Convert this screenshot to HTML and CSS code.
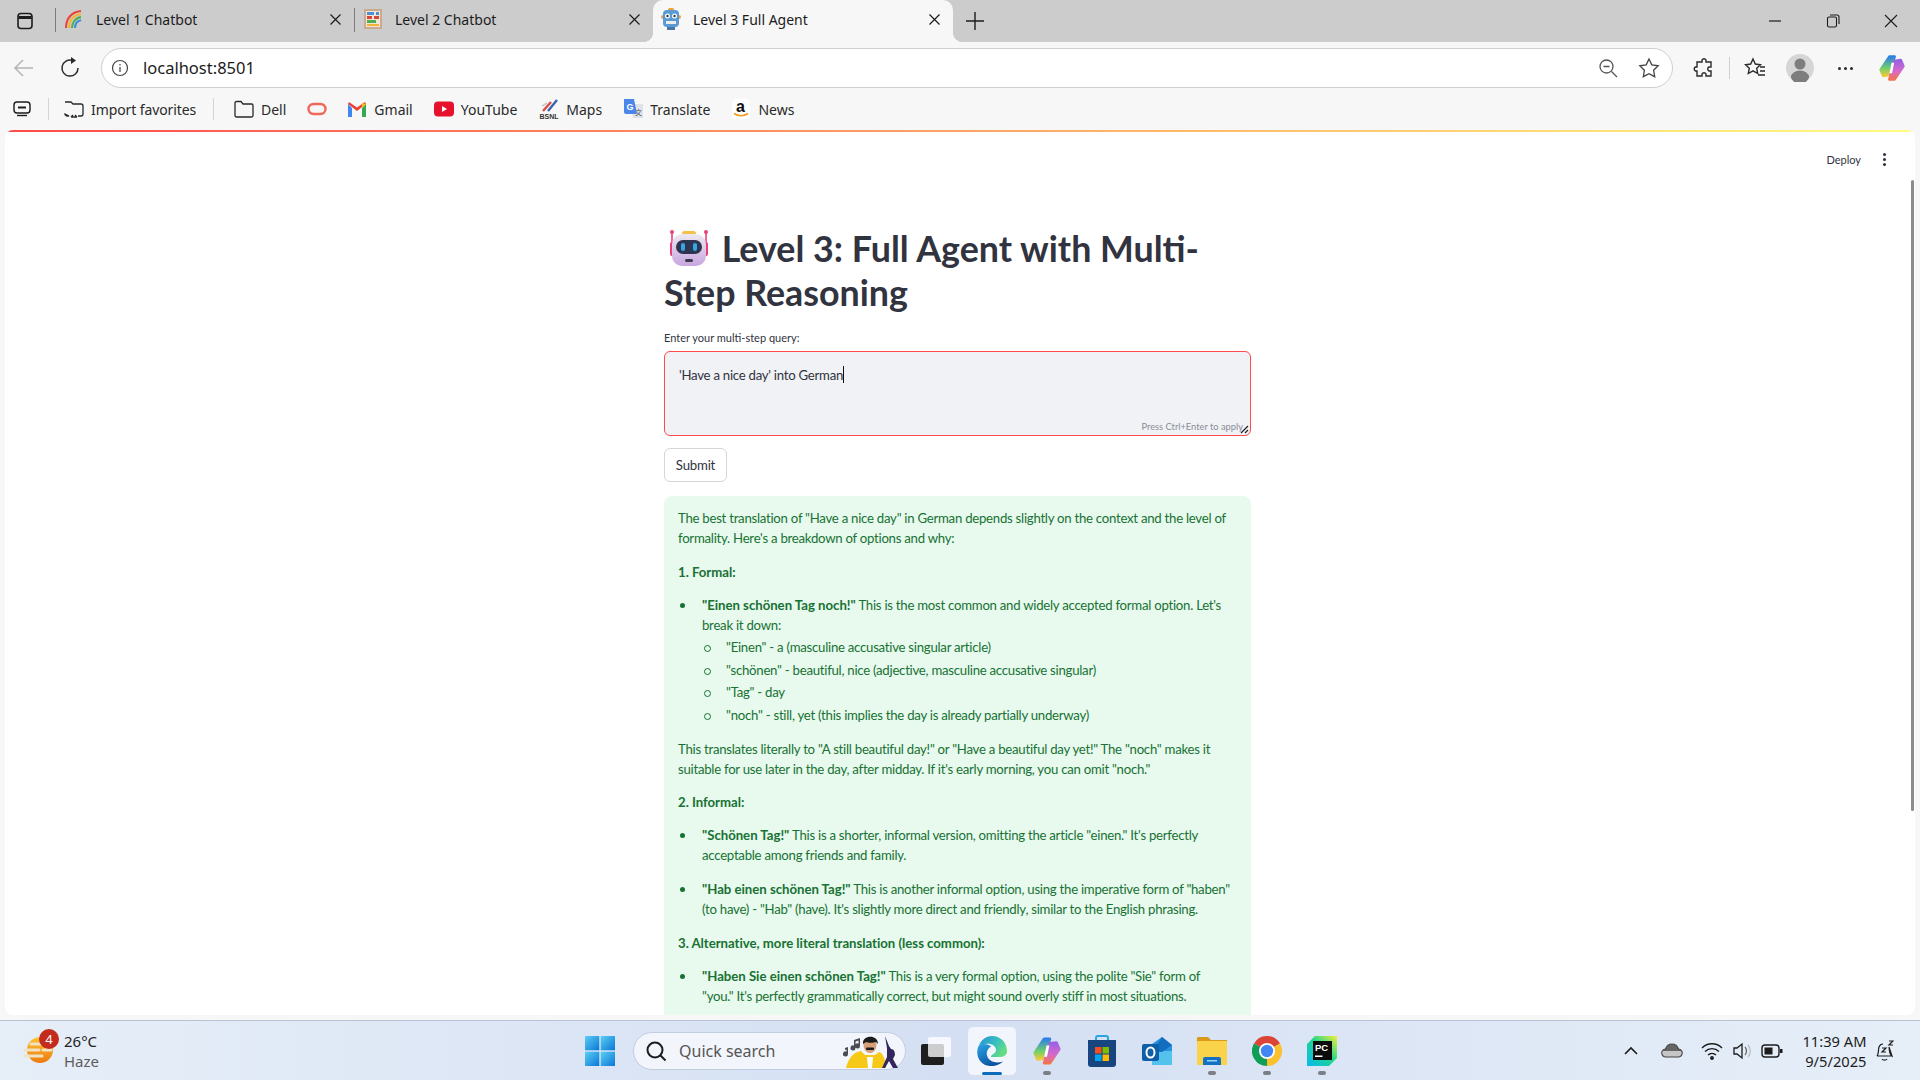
FILE: index.html

```html
<!DOCTYPE html>
<html lang="en">
<head>
    <meta charset="UTF-8">
    <title>Level 3 Full Agent</title>
    <link rel="stylesheet" href="styles.css">
</head>
<body>
    <header class="tabstrip">
        <svg class="tab-panel" width="20" height="20" viewBox="0 0 20 20" fill="none" stroke="#1c1c1c" stroke-width="1.6"><rect x="3" y="2.500" width="14" height="15" rx="3"/><path d="M3.500 6.500h13" stroke-width="3"/></svg>
        <div class="tab">
            <svg width="20" height="20" viewBox="0 0 20 20" fill="none" stroke-width="2"><path d="M2 19C2 10 7 3 17 2" stroke="#e8423a"/><path d="M5 19C5 12 9 6 17 5" stroke="#f7b42c"/><path d="M8 19C8 14 11 9 17 8" stroke="#4caf50"/><path d="M11 19C11 15 13 12 17 11" stroke="#3f8fe0"/></svg>
            <span class="tab-title">Level 1 Chatbot</span>
            <svg class="tab-close" width="11" height="11" viewBox="0 0 11 11" stroke="#1c1c1c" stroke-width="1.200"><path d="M.5.500l10 10M10.500.500l-10 10"/></svg>
        </div>
        <div class="tab">
            <svg width="20" height="22" viewBox="0 0 20 22"><rect x="1" y="1" width="18" height="20" fill="#c9a98f"/><rect x="3" y="3" width="14" height="16" fill="#f2e6d8"/><rect x="4" y="4" width="7" height="3" fill="#4a90d9"/><rect x="13" y="4" width="3" height="3" fill="#4a90d9"/><rect x="4" y="8" width="5" height="3" fill="#d9443a"/><rect x="11" y="8" width="5" height="3" fill="#d9443a"/><rect x="4" y="12" width="9" height="3" fill="#4caf50"/><rect x="4" y="16" width="12" height="2" fill="#f2b233"/></svg>
            <span class="tab-title">Level 2 Chatbot</span>
            <svg class="tab-close" width="11" height="11" viewBox="0 0 11 11" stroke="#1c1c1c" stroke-width="1.200"><path d="M.5.500l10 10M10.500.500l-10 10"/></svg>
        </div>
        <div class="tab tab-active">
            <svg width="20" height="22" viewBox="0 0 20 22"><rect x="7" y="0" width="6" height="3" rx="1.500" fill="#f0a030"/><circle cx="2" cy="9" r="2" fill="#e8a04c"/><circle cx="18" cy="9" r="2" fill="#e8a04c"/><rect x="2" y="2" width="16" height="17" rx="4" fill="#5b9bd5"/><circle cx="6.500" cy="8" r="2.500" fill="#fff"/><circle cx="13.500" cy="8" r="2.500" fill="#fff"/><circle cx="6.500" cy="8" r="1.200" fill="#333"/><circle cx="13.500" cy="8" r="1.200" fill="#333"/><rect x="5" y="13" width="10" height="3" fill="#eee"/><rect x="6" y="19" width="8" height="3" fill="#4478a8"/></svg>
            <span class="tab-title">Level 3 Full Agent</span>
            <svg class="tab-close" width="11" height="11" viewBox="0 0 11 11" stroke="#1c1c1c" stroke-width="1.200"><path d="M.5.500l10 10M10.500.500l-10 10"/></svg>
        </div>
        <svg class="tab-new" width="20" height="20" viewBox="0 0 20 20" stroke="#1c1c1c" stroke-width="1.400"><path d="M10 1v18M1 10h18"/></svg>
        <div class="window-controls">
            <svg width="14" height="14" viewBox="0 0 14 14" stroke="#1c1c1c" stroke-width="1.200"><path d="M1 7h12"/></svg>
            <svg width="14" height="14" viewBox="0 0 14 14" fill="none" stroke="#1c1c1c" stroke-width="1.100"><rect x="1.500" y="3" width="9" height="10" rx="1.500"/><path d="M4 1h7a2 2 0 0 1 2 2v7"/></svg>
            <svg width="14" height="14" viewBox="0 0 14 14" stroke="#1c1c1c" stroke-width="1.100"><path d="M1 1l12 12M13 1L1 13"/></svg>
        </div>
    </header>

    <nav class="toolbar">
        <svg class="tool-back" width="22" height="22" viewBox="0 0 22 22" fill="none" stroke="#b4b4b4" stroke-width="1.500"><path d="M20 11H2M10 3l-8 8 8 8"/></svg>
        <svg class="tool-reload" width="22" height="22" viewBox="0 0 22 22" fill="none" stroke="#2a2a2a" stroke-width="1.500"><path d="M13.500 3.500A8 8 0 1 0 19 11"/><path d="M12 0v7l5-3.500z" fill="#2a2a2a" stroke="none"/></svg>
        <div class="addressbar">
            <svg width="18" height="18" viewBox="0 0 18 18" fill="none" stroke="#444" stroke-width="1.200"><circle cx="9" cy="9" r="7.500"/><path d="M9 8v5M9 5v1.500"/></svg>
            <span class="url">localhost:8501</span>
            <svg class="addr-zoom" width="20" height="20" viewBox="0 0 20 20" fill="none" stroke="#555" stroke-width="1.300"><circle cx="8.500" cy="8.500" r="6.500"/><path d="M13.500 13.500l5.500 5.500M5.500 8.500h6"/></svg>
            <svg class="addr-star" width="22" height="22" viewBox="0 0 22 22" fill="none" stroke="#444" stroke-width="1.300"><path d="M11 2l2.800 5.900 6.400.9-4.600 4.500 1.100 6.400L11 16.700l-5.700 3 1.100-6.400L1.800 8.800l6.400-.9z"/></svg>
        </div>
        <div class="tool-right">
            <svg width="22" height="22" viewBox="0 0 22 22" fill="none" stroke="#2a2a2a" stroke-width="1.400"><path d="M9 3a2.200 2.200 0 0 1 4 0v2h5v5h-2a2.200 2.200 0 0 0 0 4h2v5h-5v-2a2.200 2.200 0 0 0-4 0v2H4v-5H2.500a2.200 2.200 0 0 1 0-4H4V5h5z"/></svg>
            <span class="tool-sep"></span>
            <svg width="22" height="22" viewBox="0 0 22 22" fill="none" stroke="#2a2a2a" stroke-width="1.400"><path d="M9 2l2.300 5 5.200.7-3.800 3.600 1 5.200L9 13.900l-4.700 2.600 1-5.200L1.500 7.700 6.700 7zM16 10h5M16 14h5M14 18h7"/></svg>
            <svg class="avatar" width="28" height="28" viewBox="0 0 28 28"><circle cx="14" cy="14" r="14" fill="#d6d6d6"/><circle cx="14" cy="10" r="5.500" fill="#7d7d7d"/><ellipse cx="14" cy="23" rx="9" ry="6.500" fill="#7d7d7d"/></svg>
            <span class="tool-dots"><i></i><i></i><i></i></span>
            <svg width="28" height="28" viewBox="0 0 30 32">
                <defs>
                    <linearGradient id="copilotA" x1="0" y1="0" x2="0" y2="1"><stop offset="0" stop-color="#2d7fe8"/><stop offset=".6" stop-color="#6fd06a"/><stop offset="1" stop-color="#f2c83c"/></linearGradient>
                    <linearGradient id="copilotB" x1="0" y1="0" x2="0" y2="1"><stop offset="0" stop-color="#9a5fe6"/><stop offset=".6" stop-color="#d86ac8"/><stop offset="1" stop-color="#f5734c"/></linearGradient>
                </defs>
                <path d="M12 3h6l-6 21-7 1-3-7z" fill="url(#copilotA)" stroke="url(#copilotA)" stroke-width="3" stroke-linejoin="round"/>
                <path d="M18 29h-6l6-21 7-1 3 7z" fill="url(#copilotB)" stroke="url(#copilotB)" stroke-width="3" stroke-linejoin="round"/>
                <path d="M14.500 10h3l-2.500 12h-3z" fill="#fff"/>
            </svg>
        </div>
    </nav>

    <nav class="bookmarks">
        <svg class="bm-first" width="18" height="16" viewBox="0 0 18 16" fill="none" stroke="#1c1c1c" stroke-width="1.400"><rect x="1" y="1" width="16" height="11" rx="3"/><path d="M5 6.500h8" stroke-width="2"/><path d="M4 14.500h10"/></svg>
        <span class="bm-sep"></span>
        <div class="bm bm-import">
            <svg width="20" height="20" viewBox="0 0 20 20" fill="none" stroke="#2a2a2a" stroke-width="1.300"><path d="M1 3h6l2 2h8a2 2 0 0 1 2 2v8a2 2 0 0 1-2 2h-3M5 17H3a2 2 0 0 1-2-2zM7 18h6M7 18l2-2M13 18l-2-2"/></svg>
            <span>Import favorites</span>
        </div>
        <span class="bm-sep"></span>
        <div class="bm bm-dell">
            <svg width="20" height="20" viewBox="0 0 20 20" fill="none" stroke="#2a2a2a" stroke-width="1.300"><path d="M1 4a1.500 1.500 0 0 1 1.500-1.500H7L9 5h8.500A1.500 1.500 0 0 1 19 6.500v10a1.500 1.500 0 0 1-1.500 1.500h-15A1.500 1.500 0 0 1 1 16.500z"/></svg>
            <span>Dell</span>
        </div>
        <div class="bm bm-oracle">
            <svg width="20" height="14" viewBox="0 0 20 14" fill="none" stroke="#f0685a" stroke-width="2.400"><rect x="1.500" y="2" width="17" height="10" rx="5"/></svg>
        </div>
        <div class="bm bm-gmail">
            <svg width="20" height="16" viewBox="0 0 20 16"><path d="M1 3v13h4V7z" fill="#4285f4"/><path d="M19 3v13h-4V7z" fill="#34a853"/><path d="M1 3l9 7 9-7-1-2-8 5.500L2 1z" fill="#ea4335"/><path d="M19 3l-4 4V2z" fill="#fbbc05"/></svg>
            <span>Gmail</span>
        </div>
        <div class="bm bm-youtube">
            <svg width="20" height="16" viewBox="0 0 20 16"><rect x="0" y="0.500" width="20" height="15" rx="4" fill="#e8112d"/><path d="M8 5l5 3-5 3z" fill="#fff"/></svg>
            <span>YouTube</span>
        </div>
        <div class="bm bm-maps">
            <svg width="21" height="22" viewBox="0 0 21 22" fill="none"><path d="M4 13L12 4" stroke="#d94a4a" stroke-width="2.400"/><path d="M9 13L18 2" stroke="#3a62b0" stroke-width="2.400"/><path d="M3 8l5-3" stroke="#c9c9c9" stroke-width="1.500"/><text x="0.500" y="21" class="mark-bsnl">BSNL</text></svg>
            <span>Maps</span>
        </div>
        <div class="bm bm-translate">
            <svg width="20" height="22" viewBox="0 0 20 22"><path d="M8 6h12v14H10z" fill="#dfe2e7"/><text x="12" y="17" class="mark-zh">文</text><path d="M1 1h10l3 15H3a2 2 0 0 1-2-2z" fill="#4a86e8"/><text x="3.500" y="12" class="mark-g">G</text></svg>
            <span>Translate</span>
        </div>
        <div class="bm bm-news">
            <svg width="20" height="22" viewBox="0 0 20 22"><rect x="1" y="1" width="18" height="20" rx="4" fill="#fff"/><text x="5" y="14" class="mark-a">a</text><path d="M3 15.500c4 3 10 3 14 0" fill="none" stroke="#f39a1e" stroke-width="1.600"/></svg>
            <span>News</span>
        </div>
    </nav>

    <section class="viewport">
        <div class="page">
            <div class="rainbow"></div>
            <div class="st-header">
                <span class="deploy">Deploy</span>
                <span class="kebab"><i></i><i></i><i></i></span>
            </div>
            <span class="scrollbar"></span>
            <main class="content">
                <h1 class="title">
                    <svg class="title-robot" width="40" height="36" viewBox="0 0 40 36">
                        <defs>
                            <linearGradient id="robotBody" x1="0" y1="0" x2="0" y2="1"><stop offset="0" stop-color="#ece9f2"/><stop offset="1" stop-color="#c9a5df"/></linearGradient>
                        </defs>
                        <rect x="13" y="1" width="14" height="5" rx="2.500" fill="#f5c04a"/>
                        <path d="M3 2v24M37 2v24" stroke="#e8407a" stroke-width="1.600"/>
                        <circle cx="3" cy="2" r="2" fill="#e8407a"/><circle cx="37" cy="2" r="2" fill="#e8407a"/>
                        <rect x="1" y="12" width="4" height="14" rx="2" fill="#e8407a"/><rect x="35" y="12" width="4" height="14" rx="2" fill="#e8407a"/>
                        <rect x="3" y="4" width="34" height="32" rx="10" fill="url(#robotBody)"/>
                        <rect x="7" y="10" width="26" height="14" rx="7" fill="#2e3550"/>
                        <rect x="12" y="13" width="4" height="8" rx="2" fill="#35a7e8"/><rect x="24" y="13" width="4" height="8" rx="2" fill="#35a7e8"/>
                        <rect x="16" y="29" width="8" height="3" rx="1.500" fill="#3a3a50"/>
                    </svg>
                    Level 3: Full Agent with Multi-Step Reasoning
                </h1>
                <label class="field-label">Enter your multi-step query:</label>
                <div class="query-box">
                    <span class="query-text">'Have a nice day' into German</span><span class="caret"></span>
                    <span class="query-hint">Press Ctrl+Enter to apply</span>
                    <svg class="query-grip" width="9" height="9" viewBox="0 0 9 9" stroke="#222" stroke-width="1.200"><path d="M1 8l7-7M5 8l3-3"/></svg>
                </div>
                <button class="submit">Submit</button>
                <div class="answer">
                    <p class="intro">The best translation of "Have a nice day" in German depends slightly on the context and the level of formality. Here's a breakdown of options and why:</p>
                    <p class="heading"><strong>1. Formal:</strong></p>
                    <ul>
                        <li>
                            <strong>"Einen schönen Tag noch!"</strong> This is the most common and widely accepted formal option. Let's break it down:
                            <ul>
                                <li>"Einen" - a (masculine accusative singular article)</li>
                                <li>"schönen" - beautiful, nice (adjective, masculine accusative singular)</li>
                                <li>"Tag" - day</li>
                                <li>"noch" - still, yet (this implies the day is already partially underway)</li>
                            </ul>
                        </li>
                    </ul>
                    <p class="after-list">This translates literally to "A still beautiful day!" or "Have a beautiful day yet!" The "noch" makes it suitable for use later in the day, after midday. If it's early morning, you can omit "noch."</p>
                    <p class="heading"><strong>2. Informal:</strong></p>
                    <ul>
                        <li><strong>"Schönen Tag!"</strong> This is a shorter, informal version, omitting the article "einen." It's perfectly acceptable among friends and family.</li>
                        <li><strong>"Hab einen schönen Tag!"</strong> This is another informal option, using the imperative form of "haben" (to have) - "Hab" (have). It's slightly more direct and friendly, similar to the English phrasing.</li>
                    </ul>
                    <p class="heading"><strong>3. Alternative, more literal translation (less common):</strong></p>
                    <ul>
                        <li><strong>"Haben Sie einen schönen Tag!"</strong> This is a very formal option, using the polite "Sie" form of<br>"you." It's perfectly grammatically correct, but might sound overly stiff in most situations.</li>
                    </ul>
                </div>
            </main>
        </div>
    </section>

    <footer class="taskbar">
        <div class="weather">
            <svg class="weather-icon" width="32" height="30" viewBox="0 0 32 30">
                <defs><linearGradient id="sunGrad" x1="0" y1="0" x2="0" y2="1"><stop offset="0" stop-color="#fbc531"/><stop offset="1" stop-color="#ee7a10"/></linearGradient></defs>
                <circle cx="17" cy="14" r="13" fill="url(#sunGrad)"/>
                <path d="M8 8h15M2 14h14M20 14h8M2 20h17" stroke="#efe3c4" stroke-width="3" stroke-linecap="round"/>
            </svg>
            <span class="weather-badge">4</span>
            <div class="weather-text"><span>26°C</span><span class="weather-haze">Haze</span></div>
        </div>
        <div class="task-center">
            <svg class="win-logo" width="30" height="30" viewBox="0 0 30 30">
                <defs><linearGradient id="winBlue" x1="0" y1="0" x2="1" y2="1"><stop offset="0" stop-color="#5ccdf5"/><stop offset="1" stop-color="#0a78d6"/></linearGradient></defs>
                <rect x="0" y="0" width="14.300" height="14.300" fill="url(#winBlue)"/><rect x="15.700" y="0" width="14.300" height="14.300" fill="url(#winBlue)"/><rect x="0" y="15.700" width="14.300" height="14.300" fill="url(#winBlue)"/><rect x="15.700" y="15.700" width="14.300" height="14.300" fill="url(#winBlue)"/>
            </svg>
            <div class="search">
                <svg width="22" height="22" viewBox="0 0 22 22" fill="none" stroke="#1c1c1c" stroke-width="2"><circle cx="10" cy="10" r="7.500"/><path d="M15.500 15.500l5 5"/></svg>
                <span>Quick search</span>
                <svg class="search-art" width="64" height="36" viewBox="0 0 64 36">
                    <path d="M4 15l3-1v7a2.500 2.500 0 1 1-1.500-2.300V16.500l-1.500.5zM13 7l6-2v8a2.500 2.500 0 1 1-1.500-2.300V7.500l-3 1V15a2.500 2.500 0 1 1-1.500-2.300z" fill="#4a4a52"/>
                    <path d="M5 35c2-9 7-16 15-17l4 4h10l4-3c4 1 6 7 7 13v3z" fill="#f6c917"/>
                    <path d="M26 24h6l-1 11h-4z" fill="#fff"/>
                    <ellipse cx="29" cy="12" rx="6.500" ry="8" fill="#d7a077"/>
                    <path d="M22 11c-1-9 15-10 15 0l-2-2c-3 1-8 1-10 0z" fill="#1c1c1c"/>
                    <rect x="25" y="14.500" width="8" height="2.500" rx="1" fill="#1c1c1c"/>
                    <path d="M44 3l4 10 2 3c3 0 4 3 4 6l-2 4 5 9h-5l-4-7-4 7h-3l5-11v-9z" fill="#33265c"/>
                </svg>
            </div>
            <svg class="task-view" width="30" height="28" viewBox="0 0 30 28"><rect x="0" y="7" width="23" height="21" rx="2" fill="#1e1e1e"/><rect x="7" y="0" width="23" height="20" rx="2" fill="#fff" fill-opacity=".78"/></svg>
            <div class="app app-active">
                <svg width="30" height="30" viewBox="0 0 30 30">
                    <defs>
                        <linearGradient id="edgeTop" x1="0" y1="0" x2="1" y2=".5"><stop offset="0" stop-color="#2a8fd8"/><stop offset=".6" stop-color="#35c0c0"/><stop offset="1" stop-color="#66dc80"/></linearGradient>
                        <linearGradient id="edgeBody" x1="0" y1="0" x2=".6" y2="1"><stop offset="0" stop-color="#2ba6e6"/><stop offset="1" stop-color="#0b4f9c"/></linearGradient>
                    </defs>
                    <path d="M2 9C-2 17 1 27 10 29.500c6 1.500 12 0 16-4-6 2-14 1-16-6-1-4 1-7 4-9-4-3-9-3-12-1z" fill="url(#edgeBody)"/>
                    <path d="M2 9C5 3 10 0 15 0c9 0 15 7 15 15 0 4-3 6-8 6h-8c0-3 5-3 5-7 0-4-5-7-10-6-3 .5-5 .5-7 1z" fill="url(#edgeTop)"/>
                </svg>
                <i class="app-pill"></i>
            </div>
            <div class="app">
                <svg width="30" height="30" viewBox="0 0 30 32">
                    <defs>
                        <linearGradient id="copTaskA" x1="0" y1="0" x2="0" y2="1"><stop offset="0" stop-color="#2d7fe8"/><stop offset=".6" stop-color="#6fd06a"/><stop offset="1" stop-color="#f2c83c"/></linearGradient>
                        <linearGradient id="copTaskB" x1="0" y1="0" x2="0" y2="1"><stop offset="0" stop-color="#9a5fe6"/><stop offset=".6" stop-color="#d86ac8"/><stop offset="1" stop-color="#f5734c"/></linearGradient>
                    </defs>
                    <path d="M12 3h6l-6 21-7 1-3-7z" fill="url(#copTaskA)" stroke="url(#copTaskA)" stroke-width="3" stroke-linejoin="round"/>
                    <path d="M18 29h-6l6-21 7-1 3 7z" fill="url(#copTaskB)" stroke="url(#copTaskB)" stroke-width="3" stroke-linejoin="round"/>
                    <path d="M14.500 10h3l-2.500 12h-3z" fill="#fff"/>
                </svg>
                <i class="app-dot"></i>
            </div>
            <div class="app">
                <svg width="30" height="32" viewBox="0 0 30 32"><path d="M9 6V3a2 2 0 0 1 2-2h8a2 2 0 0 1 2 2v3" fill="none" stroke="#2aa5e0" stroke-width="2"/><path d="M1 5h28v24a3 3 0 0 1-3 3H4a3 3 0 0 1-3-3z" fill="#16457f"/><rect x="8" y="12" width="6.500" height="6.500" fill="#f25022"/><rect x="15.500" y="12" width="6.500" height="6.500" fill="#7fba00"/><rect x="8" y="19.500" width="6.500" height="6.500" fill="#00a4ef"/><rect x="15.500" y="19.500" width="6.500" height="6.500" fill="#ffb900"/></svg>
            </div>
            <div class="app">
                <svg width="30" height="28" viewBox="0 0 30 28"><path d="M10 7L20 0l10 8v18a2 2 0 0 1-2 2H10z" fill="#2a8fdc"/><path d="M10 14h20v12a2 2 0 0 1-2 2H10z" fill="#53c3ee"/><path d="M20 0l10 8-10 7H10z" fill="#126fc0"/><rect x="0" y="7" width="17" height="17" rx="2" fill="#0f5fa8"/><ellipse cx="8.500" cy="15.500" rx="4" ry="5" fill="none" stroke="#fff" stroke-width="2"/></svg>
            </div>
            <div class="app">
                <svg width="30" height="28" viewBox="0 0 30 28"><path d="M0 1a1 1 0 0 1 1-1h10l3 3h16v4H0z" fill="#d99a18"/><rect x="0" y="4" width="30" height="24" rx="1" fill="#fbd34a"/><path d="M5 28v-6a2 2 0 0 1 2-2h2l-2 0h14a2 2 0 0 1 2 2v6z" fill="#1470c4" transform="translate(1)"/><rect x="10" y="23" width="10" height="1.500" fill="#9cd0f5"/></svg>
                <i class="app-dot"></i>
            </div>
            <div class="app">
                <svg width="30" height="30" viewBox="0 0 30 30">
                    <path d="M15 15L2 7.500A15 15 0 0 1 28 7.500z" fill="#db4437"/>
                    <path d="M15 15L2 7.500A15 15 0 0 0 15 30z" fill="#0f9d58"/>
                    <path d="M15 15L28 7.500A15 15 0 0 1 15 30z" fill="#fbc02d"/>
                    <circle cx="15" cy="15" r="8" fill="#fff"/>
                    <circle cx="15" cy="15" r="6.200" fill="#4285f4"/>
                </svg>
                <i class="app-dot"></i>
            </div>
            <div class="app">
                <svg width="30" height="30" viewBox="0 0 30 30">
                    <defs><linearGradient id="pcGrad" x1="1" y1="0" x2="0" y2="1"><stop offset="0" stop-color="#f4ee3c"/><stop offset=".45" stop-color="#21d789"/><stop offset="1" stop-color="#07b8f2"/></linearGradient></defs>
                    <path d="M8 0h22v22l-8 8H0V8z" fill="url(#pcGrad)"/>
                    <rect x="6" y="5" width="19" height="19" fill="#0b0b0b"/>
                    <text x="8" y="14.500" class="mark-pc">PC</text>
                    <rect x="8" y="19.500" width="7.500" height="1.500" fill="#fff"/>
                </svg>
                <i class="app-dot"></i>
            </div>
        </div>
        <div class="tray">
            <svg class="tray-chevron" width="14" height="9" viewBox="0 0 14 9" fill="none" stroke="#1c1c1c" stroke-width="1.600"><path d="M1 8l6-6 6 6"/></svg>
            <svg class="tray-cloud" width="22" height="15" viewBox="0 0 22 15">
                <defs><linearGradient id="cloudFill" x1="0" y1="0" x2="0" y2="1"><stop offset=".55" stop-color="#666"/><stop offset=".56" stop-color="#c6c6c6"/></linearGradient></defs>
                <path d="M5 14a4 4 0 0 1-.5-8C5.500 3 8 1 11 1s5.500 2 6.500 5a4 4 0 0 1-.5 8z" fill="url(#cloudFill)" stroke="#444" stroke-width="1.100"/>
            </svg>
            <svg class="tray-wifi" width="22" height="18" viewBox="0 0 22 18" fill="none" stroke="#1c1c1c" stroke-width="1.400"><path d="M1 6a14 14 0 0 1 20 0M4 9.500a10 10 0 0 1 14 0M7 13a6 6 0 0 1 8 0"/><circle cx="11" cy="16" r="1.200" fill="#1c1c1c"/></svg>
            <svg class="tray-speaker" width="22" height="20" viewBox="0 0 22 20" fill="none" stroke="#1c1c1c" stroke-width="1.300"><path d="M2 7v6h3l5 4V3L5 7z"/><path d="M13 6c2 2 2 6 0 8" stroke="#666"/><path d="M16 4c3 3 3 9 0 12" stroke="#bbb"/></svg>
            <svg class="tray-battery" width="22" height="14" viewBox="0 0 22 14"><rect x="1" y="1" width="17" height="12" rx="3" fill="none" stroke="#1c1c1c" stroke-width="1.400"/><rect x="3.500" y="3.500" width="8" height="7" fill="#1c1c1c"/><rect x="19" y="5" width="2.500" height="4" fill="#1c1c1c"/></svg>
            <div class="clock"><span>11:39 AM</span><span>9/5/2025</span></div>
            <svg class="tray-bell" width="18" height="22" viewBox="0 0 18 22" fill="none" stroke="#1c1c1c" stroke-width="1.200"><path d="M1 16c2-2 1-6 2-9 .7-2 2.500-3 4-3M13 7c.5 3 0 7 3 9zM1 16h15M6 19c1 1.500 4 1.500 5 0M6 8h4l-4 4h4M13 1h4l-4 4h4"/></svg>
        </div>
    </footer>
</body>
</html>
```

FILE: styles.css

```css
* {
    box-sizing: border-box;
}
html, body {
    height: 100%;
}
body {
    margin: 0;
    width: 1920px;
    height: 1080px;
    overflow: hidden;
    display: flex;
    flex-direction: column;
    background: #f0f0f0;
    font-family: "Noto Sans", sans-serif;
    color: #1c1c1c;
}
svg {
    display: block;
    flex: none;
}

/* tab strip */
.tabstrip {
    height: 42px;
    flex: none;
    display: flex;
    align-items: center;
    background: #cccccc;
}
.tab-panel {
    margin-left: 15px;
    margin-right: 20px;
}
.tab {
    width: 299px;
    height: 42px;
    display: flex;
    align-items: center;
    padding: 0 13px 4px 9px;
    position: relative;
    font-size: 14px;
}
.tab::before {
    content: "";
    position: absolute;
    left: 0;
    top: 8px;
    bottom: 10px;
    border-left: 1px solid #7d7d7d;
}
.tab-title {
    margin-left: 12px;
    flex: 1;
    color: #1c1c1c;
}
.tab-active {
    width: 300px;
    background: #f7f7f7;
    border-radius: 10px 10px 0 0;
    padding-left: 8px;
}
.tab-active::before,
.tab-active::after {
    content: "";
    position: absolute;
    top: auto;
    bottom: 0;
    width: 10px;
    height: 10px;
    border: none;
}
.tab-active::before {
    left: -10px;
    background: radial-gradient(circle at 0 0, #cccccc 10px, #f7f7f7 10.500px);
}
.tab-active::after {
    right: -10px;
    background: radial-gradient(circle at 100% 0, #cccccc 10px, #f7f7f7 10.500px);
}
.tab-new {
    margin-left: 12px;
}
.window-controls {
    margin-left: auto;
    display: flex;
    gap: 44px;
    padding-right: 22px;
}

/* address bar row */
.toolbar {
    height: 50px;
    flex: none;
    display: flex;
    align-items: center;
    background: #f7f7f7;
    padding-top: 2px;
}
.tool-back {
    margin-left: 13px;
}
.tool-reload {
    margin-left: 24px;
}
.addressbar {
    width: 1572px;
    height: 40px;
    margin-left: 20px;
    display: flex;
    align-items: center;
    background: #fff;
    border: 1px solid #cfcfcf;
    border-radius: 20px;
    padding-left: 9px;
}
.url {
    margin-left: 14px;
    padding-bottom: 2px;
    font-size: 16.500px;
    color: #1c1c1c;
}
.addr-zoom {
    margin-left: auto;
}
.addr-star {
    margin-left: 20px;
    margin-right: 12px;
}
.tool-right {
    display: flex;
    align-items: center;
    margin-left: 20px;
}
.tool-sep {
    width: 1px;
    height: 22px;
    margin: 0 14px;
    background: #cfcfcf;
}
.avatar {
    margin-left: 20px;
}
.tool-dots {
    display: flex;
    gap: 3px;
    margin-left: 24px;
    margin-right: 25px;
}
.tool-dots i {
    width: 3px;
    height: 3px;
    border-radius: 50%;
    background: #2a2a2a;
}

/* favorites row */
.bookmarks {
    height: 38px;
    flex: none;
    display: flex;
    align-items: center;
    background: #f7f7f7;
    font-size: 14px;
    padding-bottom: 4px;
}
.bm {
    display: flex;
    align-items: center;
    gap: 7px;
    flex: none;
    color: #2a2a2a;
}
.bm-first {
    margin-left: 13px;
}
.bm-sep {
    width: 1px;
    height: 22px;
    background: #d4d4d4;
    margin-left: 17px;
    margin-right: 15px;
}
.bm-import span {
    width: 105px;
    white-space: nowrap;
    letter-spacing: -0.1px;
}
.bm-dell { margin-left: 5px; }
.bm-oracle { margin-left: 21px; }
.bm-gmail { margin-left: 20px; }
.bm-youtube { margin-left: 21px; }
.bm-maps { margin-left: 22px; }
.bm-maps span { margin-left: -1px; }
.bm-translate { margin-left: 21px; }
.bm-news { margin-left: 21px; }
.mark-bsnl {
    font-family: "Liberation Sans", sans-serif;
    font-size: 7px;
    font-weight: bold;
    fill: #333;
}
.mark-g {
    font-family: "Liberation Sans", sans-serif;
    font-size: 9px;
    font-weight: bold;
    fill: #fff;
}
.mark-zh {
    font-family: "Noto Sans CJK SC", sans-serif;
    font-size: 7px;
    fill: #555;
}
.mark-a {
    font-family: "Liberation Sans", sans-serif;
    font-size: 16px;
    font-weight: bold;
    fill: #111;
}
.mark-pc {
    font-family: "Liberation Sans", sans-serif;
    font-size: 9.500px;
    font-weight: bold;
    fill: #fff;
}

/* browser viewport */
.viewport {
    flex: 1;
    min-height: 0;
    padding: 0 5px 5px;
    background: #f7f7f7;
    overflow: hidden;
}
.page {
    position: relative;
    height: 100%;
    background: #fff;
    border-radius: 8px;
    overflow: hidden;
    font-family: Lato, "Noto Sans", sans-serif;
    color: #31333f;
}
.rainbow {
    height: 2px;
    background: linear-gradient(90deg, #ff4b4b, #fffd80);
}
.st-header {
    position: absolute;
    top: 23px;
    right: 29px;
    display: flex;
    align-items: center;
    gap: 22px;
    font-size: 11px;
}
.kebab {
    display: flex;
    flex-direction: column;
    gap: 2px;
}
.kebab i {
    width: 3px;
    height: 3px;
    border-radius: 50%;
    background: #31333f;
}
.scrollbar {
    position: absolute;
    top: 50px;
    right: 1px;
    width: 3px;
    height: 631px;
    background: #8c8c8c;
    border-radius: 2px;
}
.content {
    width: 587px;
    margin-left: 659px;
    padding-top: 95px;
}
.title {
    margin: 0 0 15px;
    font-size: 35.800px;
    line-height: 44px;
    font-weight: 700;
    color: #31333f;
}
.title-robot {
    display: inline-block;
    vertical-align: -4px;
    margin: 0 4px 0 5px;
}
.field-label {
    display: block;
    font-size: 11px;
    line-height: 16px;
    margin-bottom: 5px;
}
.query-box {
    position: relative;
    height: 85px;
    padding: 13px 14px;
    background: #f0f2f6;
    border: 1px solid #ff4b4b;
    border-radius: 6px;
    font-size: 13.200px;
    letter-spacing: -0.26px;
    line-height: 20px;
}
.caret {
    display: inline-block;
    width: 1px;
    height: 17px;
    vertical-align: -3px;
    background: #111;
}
.query-hint {
    position: absolute;
    right: 7px;
    bottom: 1px;
    font-size: 9.300px;
    letter-spacing: 0;
    line-height: 14px;
    color: #8a8d96;
}
.query-grip {
    position: absolute;
    right: 1px;
    bottom: 1px;
}
.submit {
    display: block;
    width: 63px;
    height: 34px;
    margin-top: 12px;
    padding: 0;
    background: #fff;
    border: 1px solid #d5d6d9;
    border-radius: 6px;
    font: inherit;
    font-size: 13.200px;
    letter-spacing: -0.2px;
    color: #31333f;
}
.answer {
    margin-top: 14px;
    padding: 12px 14px 40px;
    background: #e8f9ee;
    border-radius: 8px;
    font-size: 13.200px;
    letter-spacing: -0.26px;
    line-height: 20px;
    color: #177233;
}
.answer p {
    margin: 0 0 14px;
}
.answer .intro {
    margin-bottom: 14px;
}
.answer .after-list {
    margin-bottom: 13px;
}
.answer .heading {
    margin-bottom: 13px;
}
.answer ul {
    margin: 0 0 14px;
    padding-left: 24px;
    list-style: none;
}
.answer li {
    position: relative;
    margin-bottom: 14px;
}
.answer li:last-child {
    margin-bottom: 0;
}
.answer li::before {
    content: "";
    position: absolute;
    left: -22px;
    top: 8px;
    width: 5px;
    height: 5px;
    border-radius: 50%;
    background: #177233;
}
.answer li ul {
    margin: 2px 0 0;
}
.answer li li {
    margin-bottom: 2.500px;
}
.answer li li::before {
    background: transparent;
    border: 1px solid #177233;
}
.answer strong {
    font-weight: 700;
    letter-spacing: -0.02px;
}

/* windows taskbar */
.taskbar {
    height: 60px;
    flex: none;
    display: flex;
    align-items: center;
    position: relative;
    border-top: 1px solid #b9c3d3;
    background: linear-gradient(90deg, #e6eff8 0%, #d4dff3 50%, #e6eff8 100%);
}
.weather {
    width: 585px;
    flex: none;
    display: flex;
    align-items: center;
    position: relative;
    padding-left: 23px;
}
.weather-badge {
    position: absolute;
    left: 39px;
    top: -2px;
    width: 20px;
    height: 20px;
    border-radius: 50%;
    background: #c42b1c;
    color: #fff;
    font-size: 13px;
    line-height: 20px;
    text-align: center;
}
.weather-text {
    display: flex;
    flex-direction: column;
    margin-left: 9px;
    font-size: 15px;
    line-height: 20px;
    color: #222;
}
.weather-haze {
    color: #5c5c5c;
}
.task-center {
    display: flex;
    align-items: center;
}
.search {
    width: 273px;
    height: 38px;
    margin-left: 18px;
    display: flex;
    align-items: center;
    padding-left: 11px;
    background: #f2f5fc;
    border: 1px solid #c3cde0;
    border-radius: 19px;
    font-size: 16px;
    color: #555;
}
.search span {
    margin-left: 12px;
}
.search-art {
    margin-left: auto;
    margin-right: 0;
}
.task-view {
    margin-left: 15px;
}
.app {
    width: 55px;
    height: 48px;
    display: flex;
    justify-content: center;
    align-items: center;
    position: relative;
}
.app-active {
    width: 48px;
    margin-left: 17px;
    margin-right: 3px;
    background: #f2f5fb;
    border-radius: 5px;
}
.app-pill {
    position: absolute;
    left: 14px;
    bottom: 0;
    width: 20px;
    height: 3px;
    border-radius: 2px;
    background: #0f6cbd;
}
.app-dot {
    position: absolute;
    left: 23.500px;
    bottom: 0;
    width: 8px;
    height: 4px;
    border-radius: 2px;
    background: #7a7f88;
}
.tray {
    position: absolute;
    right: 0;
    top: 0;
    bottom: 0;
    display: flex;
    align-items: center;
    padding-right: 26px;
}
.tray-cloud { margin-left: 23px; }
.tray-wifi { margin-left: 17.700px; }
.tray-speaker { margin-left: 9.300px; }
.tray-battery { margin-left: 7.500px; }
.clock {
    display: flex;
    flex-direction: column;
    align-items: flex-end;
    margin-left: 19px;
    font-size: 14.700px;
    line-height: 20px;
    color: #1c1c1c;
}
.tray-bell {
    margin-left: 9.500px;
}
```
